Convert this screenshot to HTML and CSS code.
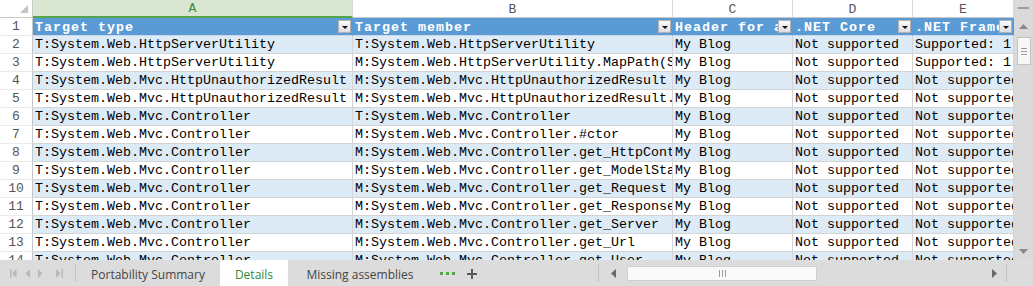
FILE: index.html
```html
<!DOCTYPE html>
<html>
<head>
<meta charset="utf-8">
<link rel="stylesheet" href="styles.css">
</head>
<body>
<div class="app">
  <div class="main">
    <div class="grid">
      <div class="corner"><svg width="10" height="10" viewBox="0 0 10 10"><polygon points="9,1 9,9 1,9" fill="#c4c4c4"/></svg></div>
      <div class="colhead sel">A</div>
      <div class="colhead">B</div>
      <div class="colhead">C</div>
      <div class="colhead">D</div>
      <div class="colhead">E</div>

      <div class="rowhead">1</div>
      <div class="cell hdr"><span class="t">Target type</span><span class="fbtn"></span></div>
      <div class="cell hdr"><span class="t">Target member</span><span class="fbtn"></span></div>
      <div class="cell hdr"><span class="t">Header for assembly name entries</span><span class="fbtn"></span></div>
      <div class="cell hdr"><span class="t">.NET Core</span><span class="fbtn"></span></div>
      <div class="cell hdr"><span class="t">.NET Framework</span><span class="fbtn"></span></div>

      <div class="rowhead">2</div>
      <div class="cell band">T:System.Web.HttpServerUtility</div>
      <div class="cell band">T:System.Web.HttpServerUtility</div>
      <div class="cell band">My Blog</div>
      <div class="cell band">Not supported</div>
      <div class="cell band">Supported: 1.1+</div>

      <div class="rowhead">3</div>
      <div class="cell">T:System.Web.HttpServerUtility</div>
      <div class="cell">M:System.Web.HttpServerUtility.MapPath(System.String)</div>
      <div class="cell">My Blog</div>
      <div class="cell">Not supported</div>
      <div class="cell">Supported: 1.1+</div>

      <div class="rowhead">4</div>
      <div class="cell band">T:System.Web.Mvc.HttpUnauthorizedResult</div>
      <div class="cell band">M:System.Web.Mvc.HttpUnauthorizedResult</div>
      <div class="cell band">My Blog</div>
      <div class="cell band">Not supported</div>
      <div class="cell band">Not supported</div>

      <div class="rowhead">5</div>
      <div class="cell">T:System.Web.Mvc.HttpUnauthorizedResult</div>
      <div class="cell">M:System.Web.Mvc.HttpUnauthorizedResult.#ctor(System.String)</div>
      <div class="cell">My Blog</div>
      <div class="cell">Not supported</div>
      <div class="cell">Not supported</div>

      <div class="rowhead">6</div>
      <div class="cell band">T:System.Web.Mvc.Controller</div>
      <div class="cell band">T:System.Web.Mvc.Controller</div>
      <div class="cell band">My Blog</div>
      <div class="cell band">Not supported</div>
      <div class="cell band">Not supported</div>

      <div class="rowhead">7</div>
      <div class="cell">T:System.Web.Mvc.Controller</div>
      <div class="cell">M:System.Web.Mvc.Controller.#ctor</div>
      <div class="cell">My Blog</div>
      <div class="cell">Not supported</div>
      <div class="cell">Not supported</div>

      <div class="rowhead">8</div>
      <div class="cell band">T:System.Web.Mvc.Controller</div>
      <div class="cell band">M:System.Web.Mvc.Controller.get_HttpContext</div>
      <div class="cell band">My Blog</div>
      <div class="cell band">Not supported</div>
      <div class="cell band">Not supported</div>

      <div class="rowhead">9</div>
      <div class="cell">T:System.Web.Mvc.Controller</div>
      <div class="cell">M:System.Web.Mvc.Controller.get_ModelState</div>
      <div class="cell">My Blog</div>
      <div class="cell">Not supported</div>
      <div class="cell">Not supported</div>

      <div class="rowhead">10</div>
      <div class="cell band">T:System.Web.Mvc.Controller</div>
      <div class="cell band">M:System.Web.Mvc.Controller.get_Request</div>
      <div class="cell band">My Blog</div>
      <div class="cell band">Not supported</div>
      <div class="cell band">Not supported</div>

      <div class="rowhead">11</div>
      <div class="cell">T:System.Web.Mvc.Controller</div>
      <div class="cell">M:System.Web.Mvc.Controller.get_Response</div>
      <div class="cell">My Blog</div>
      <div class="cell">Not supported</div>
      <div class="cell">Not supported</div>

      <div class="rowhead">12</div>
      <div class="cell band">T:System.Web.Mvc.Controller</div>
      <div class="cell band">M:System.Web.Mvc.Controller.get_Server</div>
      <div class="cell band">My Blog</div>
      <div class="cell band">Not supported</div>
      <div class="cell band">Not supported</div>

      <div class="rowhead">13</div>
      <div class="cell">T:System.Web.Mvc.Controller</div>
      <div class="cell">M:System.Web.Mvc.Controller.get_Url</div>
      <div class="cell">My Blog</div>
      <div class="cell">Not supported</div>
      <div class="cell">Not supported</div>

      <div class="rowhead">14</div>
      <div class="cell band">T:System.Web.Mvc.Controller</div>
      <div class="cell band">M:System.Web.Mvc.Controller.get_User</div>
      <div class="cell band">My Blog</div>
      <div class="cell band">Not supported</div>
      <div class="cell band">Not supported</div>
    </div>

    <div class="vscroll">
      <div class="vsplit"><span class="splitline"></span></div>
      <div class="varrow"><svg width="9" height="5" viewBox="0 0 9 5"><polygon points="0,5 9,5 4.5,0" fill="#8a8a8a"/></svg></div>
      <div class="vthumb"><span class="grip"></span><span class="grip"></span><span class="grip"></span></div>
      <div class="vtrack"></div>
      <div class="varrow"><svg width="9" height="5" viewBox="0 0 9 5"><polygon points="0,0 9,0 4.5,5" fill="#8a8a8a"/></svg></div>
    </div>
  </div>

  <div class="tabbar">
    <div class="nav">
      <svg width="75" height="26" viewBox="0 0 75 26">
        <rect x="10" y="9" width="1.5" height="9" fill="#b8b8b8"/>
        <polygon points="16.5,9 16.5,18 12,13.5" fill="#b8b8b8"/>
        <polygon points="30,9 30,18 25.5,13.5" fill="#b8b8b8"/>
        <polygon points="38,9 38,18 42.5,13.5" fill="#b8b8b8"/>
        <polygon points="56,9 56,18 60.5,13.5" fill="#b8b8b8"/>
        <rect x="61.5" y="9" width="1.5" height="9" fill="#b8b8b8"/>
      </svg>
    </div>
    <span class="sep"></span>
    <div class="tab t1">Portability Summary</div>
    <div class="tab active">Details</div>
    <div class="tab t3">Missing assemblies</div>
    <div class="more">
      <svg width="18" height="4" viewBox="0 0 18 4"><rect x="0" y="0" width="3" height="3" fill="#4fa543"/><rect x="6" y="0" width="3" height="3" fill="#4fa543"/><rect x="12" y="0" width="3" height="3" fill="#4fa543"/></svg>
      <svg class="plus" width="10" height="10" viewBox="0 0 10 10"><rect x="4" y="0" width="2" height="10" fill="#5a5a5a"/><rect x="0" y="4" width="10" height="2" fill="#5a5a5a"/></svg>
    </div>
    <div class="spacer"></div>
    <div class="hscroll">
      <span class="sep"></span>
      <div class="harrow left"><svg width="5" height="9" viewBox="0 0 5 9"><polygon points="5,0 5,9 0,4.5" fill="#6a6a6a"/></svg></div>
      <div class="hthumb"><span class="vgrip"></span><span class="vgrip"></span><span class="vgrip"></span></div>
      <div class="htrack"></div>
      <div class="harrow right"><svg width="5" height="9" viewBox="0 0 5 9"><polygon points="0,0 0,9 5,4.5" fill="#6a6a6a"/></svg></div>
      <span class="sep"></span>
      <div class="tail"></div>
    </div>
  </div>
</div>
</body>
</html>
```
FILE: styles.css
```css
* { box-sizing: border-box; }
html, body { margin: 0; padding: 0; }
body {
  width: 1033px;
  height: 286px;
  overflow: hidden;
  background: #ffffff;
  font-family: "Liberation Mono", "DejaVu Sans Mono", monospace;
}
.app { display: flex; flex-direction: column; width: 1033px; height: 286px; }
.main { display: flex; height: 260px; overflow: hidden; }

.grid {
  display: grid;
  grid-template-columns: 33px 320px 320px 120px 120px 101px;
  grid-auto-rows: 18px;
  align-content: start;
  width: 1014px;
  flex: none;
  overflow: hidden;
}
.grid > div {
  border-right: 1px solid #d4d4d4;
  border-bottom: 1px solid #d4d4d4;
  overflow: hidden;
  white-space: nowrap;
  font-size: 13.33px;
  line-height: 16px;
  padding-top: 1px;
  color: #000;
}
.corner {
  background: #ffffff;
  display: flex;
  align-items: flex-end;
  justify-content: flex-end;
}
.grid > .corner { border-right-color: #c8c8c8; border-bottom-color: #c8c8c8; padding: 0 3px 3px 0; }
.grid > .colhead {
  background: #ffffff;
  color: #555;
  text-align: center;
  font-size: 13px;
  padding-top: 2px;
  line-height: 15px;
  border-bottom-color: #c8c8c8;
  border-right-color: #d8d8d8;
}
.grid > .colhead.sel {
  background: #d9e6d1;
  color: #3d8a3a;
  border-bottom: 2px solid #55a64a;
  line-height: 14px;
}
.grid > .rowhead {
  background: #ffffff;
  color: #555;
  text-align: center;
  font-size: 13px;
  border-right-color: #c8c8c8;
  border-bottom-color: #ebebeb;
}
.cell { padding-left: 2px; }
.band { background: #ddebf7; }
.grid > .hdr {
  background: #5b9bd5;
  color: #ffffff;
  font-weight: bold;
  letter-spacing: 1px;
  display: flex;
  align-items: center;
  padding-top: 0;
  padding-right: 1px;
  border-right-color: #5b9bd5;
  border-bottom-color: #c9d8ea;
}
.hdr .t { flex: 1; min-width: 0; overflow: hidden; white-space: nowrap; padding-top: 2px; }
.fbtn {
  flex: none;
  width: 13px;
  height: 13px;
  border: 1px solid #b3b3b3;
  background: linear-gradient(#fbfbfb, #dedede);
  display: flex;
  align-items: center;
  justify-content: center;
}
.fbtn::after {
  content: "";
  border-left: 3px solid transparent;
  border-right: 3px solid transparent;
  border-top: 3px solid #111;
  margin-top: 1px;
}

/* vertical scrollbar */
.vscroll {
  width: 19px;
  flex: none;
  background: #dadada;
  display: flex;
  flex-direction: column;
  align-items: center;
}
.vsplit { height: 18px; display: flex; align-items: center; justify-content: center; width: 100%; }
.splitline { width: 11px; height: 2px; background: #9e9e9e; margin-top: -3px; }
.varrow { height: 17px; display: flex; align-items: center; justify-content: center; width: 100%; }
.vthumb {
  width: 14px;
  height: 28px;
  margin-top: 2px;
  background: #f7f7f7;
  border: 1px solid #c2c2c2;
  display: flex;
  flex-direction: column;
  align-items: center;
  justify-content: center;
  gap: 2px;
}
.grip { width: 6px; height: 1px; background: #9a9a9a; }
.vtrack { flex: 1; }

/* tab bar */
.tabbar {
  height: 26px;
  background: #dcdcdc;
  display: flex;
  align-items: stretch;
  font-family: "Open Sans", "Noto Sans", sans-serif;
  font-size: 12px;
  color: #444;
}
.nav { width: 75px; flex: none; }
.sep { width: 1px; flex: none; background: #c4c4c4; margin: 4px 0; }
.tab {
  flex: none;
  display: flex;
  align-items: center;
  justify-content: center;
  padding-top: 2px;
}
.t1 { width: 144px; }
.active { width: 68px; background: #ffffff; color: #2f8a3a; }
.t3 { width: 144px; }
.more { flex: none; display: flex; align-items: center; gap: 9px; padding-left: 8px; padding-top: 1px; width: 50px; }
.spacer { flex: 1; }
.hscroll { width: 435px; flex: none; display: flex; align-items: center; }
.hscroll .sep { align-self: stretch; }
.harrow { display: flex; align-items: center; justify-content: center; height: 100%; }
.harrow.left { width: 28px; }
.harrow.right { width: 23px; }
.hthumb {
  width: 190px;
  height: 15px;
  background: #f9f9f9;
  border: 1px solid #cfcfcf;
  display: flex;
  align-items: center;
  justify-content: center;
  gap: 2px;
}
.vgrip { width: 1px; height: 7px; background: #9a9a9a; }
.htrack { flex: 1; }
.tail { width: 26px; }
```
